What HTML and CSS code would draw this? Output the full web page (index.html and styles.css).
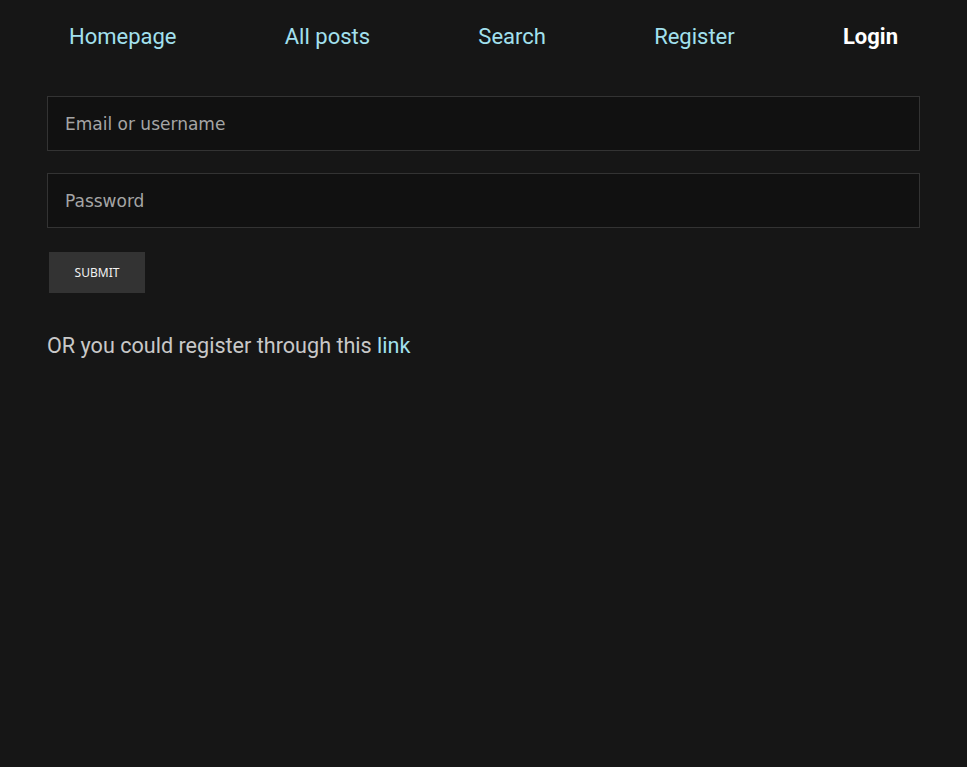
FILE: index.html
```html
<!DOCTYPE html>
<html>
<head>
<meta charset="utf-8">
<link rel="stylesheet" href="styles.css">
</head>
<body>
<nav class="nav">
  <a class="nav-link" href="#">Homepage</a>
  <a class="nav-link" href="#">All posts</a>
  <a class="nav-link" href="#">Search</a>
  <a class="nav-link" href="#">Register</a>
  <a class="nav-link active" href="#">Login</a>
</nav>
<main class="container">
  <form class="login-form">
    <input class="field" type="text" placeholder="Email or username">
    <input class="field" type="password" placeholder="Password">
    <button class="submit" type="button">SUBMIT</button>
  </form>
  <p class="alt">OR you could register through this <a class="alt-link" href="#">link</a></p>
</main>
</body>
</html>
```
FILE: styles.css
```css
html, body {
  margin: 0;
  padding: 0;
  background: #161616;
  font-family: Roboto, "Liberation Sans", sans-serif;
}
.nav {
  display: flex;
  justify-content: space-between;
  padding: 0 69px;
  height: 72px;
  align-items: center;
}
.nav-link {
  color: #a2e0ee;
  text-decoration: none;
  font-size: 22px;
}
.nav-link.active {
  color: #ffffff;
  font-weight: bold;
}
.container {
  padding: 24px 47px 0 47px;
}
.login-form {
  display: flex;
  flex-direction: column;
  align-items: flex-start;
  gap: 22px;
}
.field {
  box-sizing: border-box;
  width: 100%;
  height: 55px;
  margin: 0;
  padding: 0 17px;
  background: #111111;
  border: 1px solid #333333;
  color: #dddddd;
  font-family: "DejaVu Sans", sans-serif;
  font-size: 17px;
  outline: none;
}
.field::placeholder {
  color: #a5a5a5;
}
.submit {
  margin: 2px 0 0 2px;
  width: 96px;
  height: 41px;
  background: #333333;
  border: none;
  color: #f2f2f2;
  font-family: "Noto Sans", sans-serif;
  font-size: 12px;
  padding: 0;
}
.alt {
  margin: 40px 0 0 0;
  color: #c8c8c8;
  font-size: 21.6px;
}
.alt-link {
  color: #a2e0ee;
  text-decoration: none;
}
```
